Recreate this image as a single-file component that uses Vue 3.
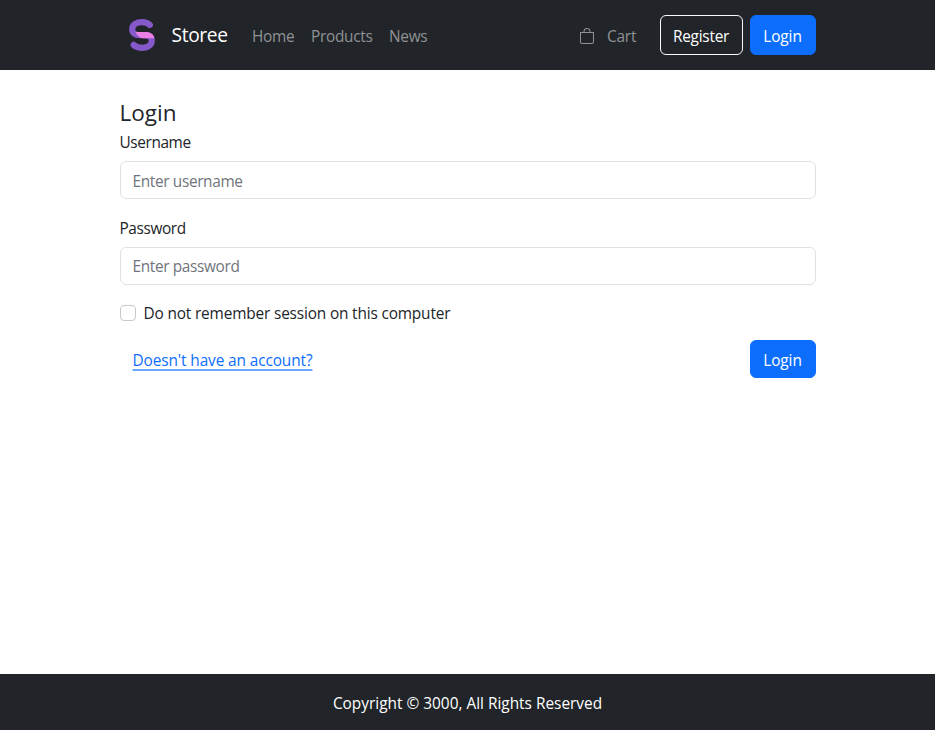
<script setup>
import { ref } from 'vue'

const links = [
  { name: 'Home', width: 43 },
  { name: 'Products', width: 62 },
  { name: 'News', width: 39 },
]
const username = ref('')
const password = ref('')
const forget = ref(false)
</script>

<template>
  <div class="page">
    <header class="navbar">
      <div class="container bar">
        <a class="brand">
          <svg class="logo" viewBox="0 0 26 32" width="26" height="32" fill="none">
            <path d="M20.8 5.9C18.8 4 16.4 3.2 13.3 3.2C7.2 3.2 3.2 5.9 3.2 10.2C3.2 14 6 16.1 10.5 16.1H15.5C20.4 16.1 22.8 18.2 22.8 21.6C22.8 26 19 28.8 13.5 28.8C9.6 28.8 6.8 27.9 4.7 25.9" stroke="#8659cb" stroke-width="6.2" stroke-linecap="round" />
            <path d="M6.6 13H17.5C21.8 13.1 24.4 15.2 25.3 19.2H13.5C10 18.7 8 16.2 6.6 13Z" fill="#ea80e6" />
          </svg>
          <span class="brand-name">Storee</span>
        </a>
        <nav class="links">
          <a v-for="l in links" :key="l.name" :style="{ width: l.width + 'px' }">{{ l.name }}</a>
        </nav>
        <a class="cart">
          <svg width="16" height="16" viewBox="0 0 16 16" fill="currentColor">
            <path d="M8 1a2.5 2.5 0 0 1 2.5 2.5V4h-5v-.5A2.5 2.5 0 0 1 8 1m3.5 3v-.5a3.5 3.5 0 1 0-7 0V4H1v10a2 2 0 0 0 2 2h10a2 2 0 0 0 2-2V4zM2 5h12v9a1 1 0 0 1-1 1H3a1 1 0 0 1-1-1z" />
          </svg>
          <span>Cart</span>
        </a>
        <button class="btn outline">Register</button>
        <button class="btn primary tall">Login</button>
      </div>
    </header>

    <main class="container content">
      <h1>Login</h1>
      <form @submit.prevent>
        <label class="label" for="username">Username</label>
        <input id="username" v-model="username" class="field" type="text" placeholder="Enter username" />
        <label class="label" for="password">Password</label>
        <input id="password" v-model="password" class="field" type="password" placeholder="Enter password" />
        <label class="check">
          <input v-model="forget" type="checkbox" />
          <span>Do not remember session on this computer</span>
        </label>
        <div class="actions">
          <a class="signup">Doesn't have an account?</a>
          <button class="btn primary">Login</button>
        </div>
      </form>
    </main>

    <footer class="footer"><span>Copyright © 3000, All Rights Reserved</span></footer>
  </div>
</template>

<style>
body { margin: 0; background: #fff; }
</style>

<style scoped>
.page {
  display: flex;
  flex-direction: column;
  height: 730px;
  color: #212529;
  font: 15.4px/24px "Segoe UI", "Open Sans", sans-serif;
}
.page *, .page { box-sizing: border-box; }
a, span, label { white-space: nowrap; }
.navbar { height: 70px; background: #212529; }
.container { width: 720px; margin: 0 auto; padding: 0 12px; }
.bar { display: flex; align-items: center; height: 70px; }
.brand { display: flex; align-items: center; width: 124.5px; padding-left: 9.5px; color: #fff; }
.logo { flex: none; }
.brand-name { margin-left: 16.5px; font-size: 19.2px; line-height: 30px; letter-spacing: -0.35px; }
.links { display: flex; gap: 16px; margin-left: 8px; padding-top: 3px; color: #909294; letter-spacing: -0.3px; }
.cart { display: flex; align-items: center; margin-left: auto; width: 81px; gap: 12.5px; padding-top: 3px; color: #909294; letter-spacing: -0.2px; }
.cart svg { margin-top: -2px; }
.btn {
  height: 38px;
  width: 66px;
  padding: 3px 0 0;
  border: 1px solid #0d6efd;
  border-radius: 6px;
  color: #fff;
  font: inherit;
  letter-spacing: -0.1px;
  text-align: center;
}
.primary { background: #0d6efd; }
.tall, .outline { height: 40px; }
.outline { width: 83px; margin-right: 7px; background: transparent; border-color: #f8f9fa; letter-spacing: -0.25px; }
.content { flex: 1; padding-top: 27px; }
h1 { margin: 0; font-size: 22.5px; font-weight: 400; line-height: 32px; height: 33px; }
.label { display: block; height: 24px; padding-top: 1px; margin-bottom: 7px; letter-spacing: -0.4px; }
.field {
  display: block;
  width: 100%;
  height: 38px;
  margin: 0 0 17px;
  padding: 3px 12px 0;
  border: 1px solid #dee2e6;
  border-radius: 6px;
  outline: none;
  color: #212529;
  background: #fff;
  font: inherit;
  letter-spacing: -0.35px;
}
#password { padding-top: 1px; }
.field::placeholder { color: #6f757b; opacity: 1; }
.check { display: flex; align-items: center; height: 24px; letter-spacing: -0.16px; }
.check input {
  appearance: none;
  width: 16px;
  height: 16px;
  margin: 0 8px 3px 0;
  border: 1px solid #c6c8ca;
  border-radius: 4px;
}
.actions { display: flex; justify-content: space-between; align-items: center; margin-top: 14px; }
.signup { margin: 3px 0 0 13px; color: #0d6efd; letter-spacing: -0.11px; text-decoration: underline; text-decoration-color: #6ea8fe; text-decoration-thickness: 1.5px; text-underline-offset: 3px; }
.footer { height: 56px; padding-top: 18px; text-align: center; color: #fff; background: #212529; }
</style>
